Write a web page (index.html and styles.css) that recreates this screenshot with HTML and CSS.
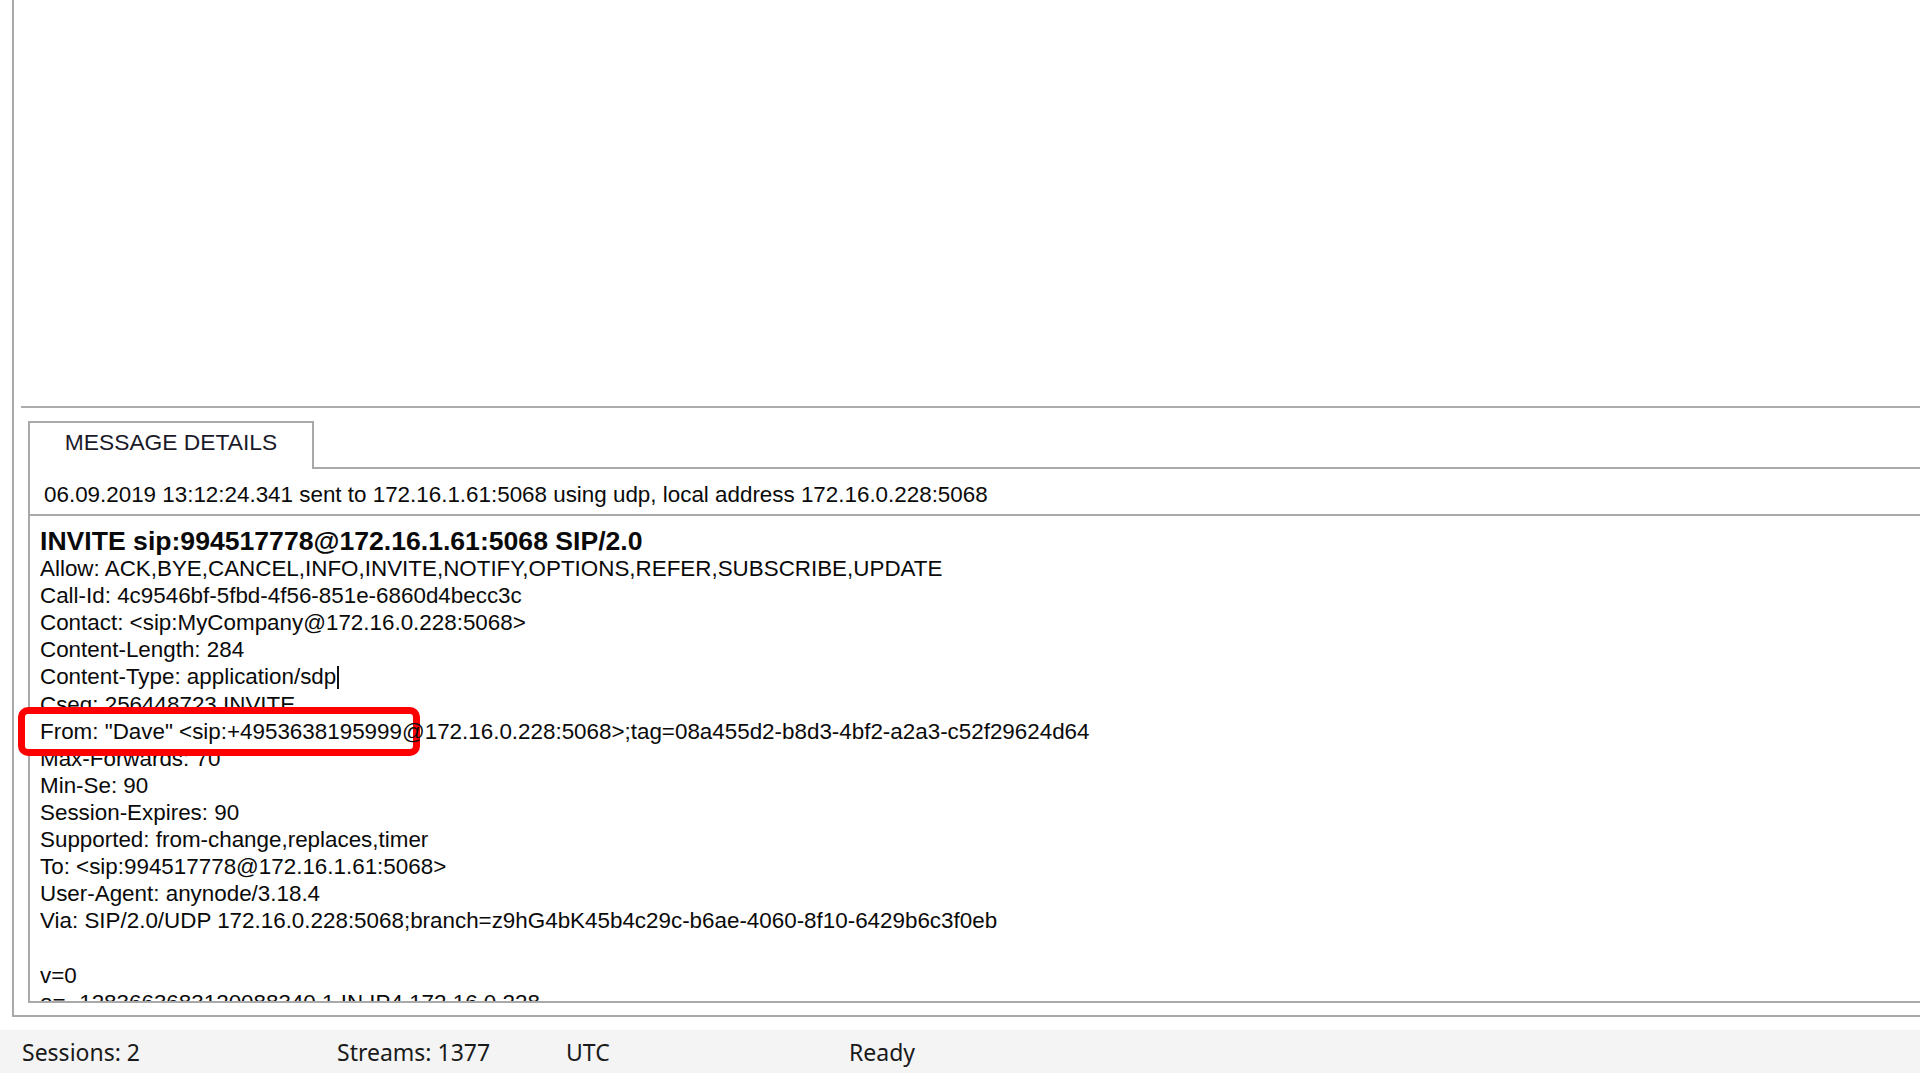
FILE: index.html
```html
<!DOCTYPE html>
<html lang="en">
<head>
<meta charset="utf-8">
<title>Message Details</title>
<link rel="stylesheet" href="styles.css">
</head>
<body>
<div class="window">
  <div class="frame">
    <div class="list"></div>
    <div class="splitter"></div>
    <div class="tabs">
      <div class="tab-strip">
        <div class="tab">MESSAGE DETAILS</div>
        <div class="tab-fill"></div>
      </div>
      <div class="page">
        <div class="info">06.09.2019 13:12:24.341 sent to 172.16.1.61:5068 using udp, local address 172.16.0.228:5068</div>
        <div class="body">
          <div class="line head">INVITE sip:994517778@172.16.1.61:5068 SIP/2.0</div>
          <div class="line">Allow: ACK,BYE,CANCEL,INFO,INVITE,NOTIFY,OPTIONS,REFER,SUBSCRIBE,UPDATE</div>
          <div class="line">Call-Id: 4c9546bf-5fbd-4f56-851e-6860d4becc3c</div>
          <div class="line">Contact: &lt;sip:MyCompany@172.16.0.228:5068&gt;</div>
          <div class="line">Content-Length: 284</div>
          <div class="line">Content-Type: application/sdp<span class="caret"></span></div>
          <div class="line">Cseq: 256448723 INVITE</div>
          <div class="line from">From: "Dave" &lt;sip:+4953638195999@172.16.0.228:5068&gt;;tag=08a455d2-b8d3-4bf2-a2a3-c52f29624d64</div>
          <div class="line">Max-Forwards: 70</div>
          <div class="line">Min-Se: 90</div>
          <div class="line">Session-Expires: 90</div>
          <div class="line">Supported: from-change,replaces,timer</div>
          <div class="line">To: &lt;sip:994517778@172.16.1.61:5068&gt;</div>
          <div class="line">User-Agent: anynode/3.18.4</div>
          <div class="line">Via: SIP/2.0/UDP 172.16.0.228:5068;branch=z9hG4bK45b4c29c-b6ae-4060-8f10-6429b6c3f0eb</div>
          <div class="line"> </div>
          <div class="line">v=0</div>
          <div class="line">o=- 1283663683120088340 1 IN IP4 172.16.0.228</div>
        </div>
      </div>
    </div>
  </div>
  <div class="status">
    <div class="cell c1">Sessions: 2</div>
    <div class="cell c2">Streams: 1377</div>
    <div class="cell c3">UTC</div>
    <div class="cell c4">Ready</div>
  </div>
</div>
</body>
</html>
```
FILE: styles.css
```css
html, body {
  margin: 0;
  padding: 0;
}

body {
  width: 1920px;
  height: 1080px;
  overflow: hidden;
  background: #ffffff;
  font-family: "Liberation Sans", Arial, sans-serif;
  color: #0a0a0a;
}

.window {
  display: flex;
  flex-direction: column;
  height: 1080px;
}

.frame {
  box-sizing: border-box;
  height: 1017px;
  margin-left: 12px;
  padding-left: 7px;
  border-left: 2px solid #a9a9a9;
  border-bottom: 2px solid #a9a9a9;
  display: flex;
  flex-direction: column;
}

.list {
  height: 406px;
  flex: none;
}

.splitter {
  height: 2px;
  background: #acacac;
  flex: none;
}

.tabs {
  margin-top: 13px;
  margin-left: 7px;
  display: flex;
  flex-direction: column;
  flex: none;
}

.tab-strip {
  display: flex;
  height: 48px;
}

.tab {
  box-sizing: border-box;
  width: 286px;
  height: 48px;
  border: 2px solid #a9a9a9;
  border-bottom: none;
  font-size: 22.8px;
  line-height: 38px;
  text-align: center;
  color: #1a1a2a;
}

.tab-fill {
  flex: 1;
  box-sizing: border-box;
  height: 48px;
  border-bottom: 2px solid #a9a9a9;
}

.page {
  box-sizing: border-box;
  height: 534px;
  border-left: 2px solid #a9a9a9;
  border-bottom: 2px solid #a9a9a9;
}

.info {
  box-sizing: border-box;
  height: 47px;
  padding-left: 14px;
  padding-top: 6px;
  line-height: 40px;
  font-size: 22.4px;
  border-bottom: 2px solid #a9a9a9;
  white-space: pre;
}

.body {
  height: 485px;
  box-sizing: border-box;
  padding-left: 10px;
  padding-top: 12px;
  overflow: hidden;
  clip-path: inset(0 -200px 0 -40px);
  overflow: visible;
}

.line {
  font-size: 22.4px;
  line-height: 27.1px;
  height: 27.1px;
  white-space: pre;
}

.line.head {
  font-weight: bold;
  font-size: 26.6px;
}

.caret {
  display: inline-block;
  width: 2px;
  height: 23px;
  background: #111;
  vertical-align: -5px;
  margin-left: 1px;
}

.line.from {
  position: relative;
  z-index: 1;
}

.line.from::before {
  content: "";
  position: absolute;
  left: -22px;
  top: -11px;
  width: 402px;
  height: 49px;
  box-sizing: border-box;
  border: 7px solid #ff0000;
  border-radius: 10px;
  background: #ffffff;
  z-index: -1;
}

.status {
  margin-top: 13px;
  height: 43px;
  background: #f4f4f4;
  display: flex;
  align-items: center;
  padding-left: 22px;
  font-family: "Noto Sans", "Open Sans", sans-serif;
  font-size: 23px;
  color: #1a1a1a;
}

.cell {
  white-space: pre;
}

.c1 { width: 315px; }
.c2 { width: 229px; }
.c3 { width: 283px; }
.c4 { width: 200px; }
```
